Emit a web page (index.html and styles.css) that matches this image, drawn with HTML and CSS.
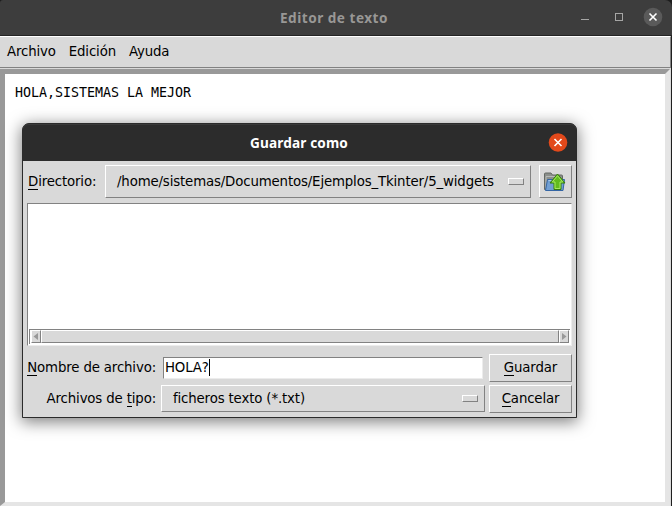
FILE: index.html
```html
<!DOCTYPE html>
<html lang="es">
<head>
<meta charset="utf-8">
<title>Editor de texto</title>
<link rel="stylesheet" href="styles.css">
</head>
<body>
<div class="editor">
  <header class="titlebar">
    <span class="title">Editor de texto</span>
    <svg class="controls" width="96" height="35" viewBox="0 0 96 35">
      <path d="M5 19.5h8" stroke="#a6a6a5"/>
      <rect x="39.500" y="13.500" width="7" height="7" fill="none" stroke="#a6a6a5"/>
      <circle cx="77" cy="17" r="9.300" fill="#5a5a5a"/>
      <path d="M73.500 13.500l7 7m0-7l-7 7" stroke="#fff" stroke-width="1.600"/>
    </svg>
  </header>
  <nav class="menubar"><span>Archivo</span><span>Edición</span><span>Ayuda</span></nav>
  <main class="textarea">HOLA,SISTEMAS LA MEJOR</main>
</div>

<section class="dialog">
  <header class="dialog-title">
    <span class="title">Guardar como</span>
    <svg class="dialog-close" width="20" height="20" viewBox="0 0 20 20">
      <circle cx="10" cy="9.500" r="9.300" fill="#e2491b"/>
      <path d="M6.500 6l7 7m0-7l-7 7" stroke="#fff" stroke-width="1.600"/>
    </svg>
  </header>
  <div class="dialog-body">
    <div class="directory-row">
      <label class="path-label"><u>D</u>irectorio:</label>
      <div class="select raised"><span class="path">/home/sistemas/Documentos/Ejemplos_Tkinter/5_widgets</span><i class="indicator"></i></div>
      <div class="up-button raised">
        <svg width="22" height="20" viewBox="0 0 22 20">
          <path d="M.5 17.500V2q0-1 1-1h5.500l1.500 2h9q1 0 1 1V17.500z" fill="#8b8f8b" stroke="#646864"/>
          <path d="M2 16V4.500h14" fill="none" stroke="#b7bab7"/>
          <path d="M3.500 7.500h17l-1.500 11h-17.500z" fill="#719fd3" stroke="#3465a4"/>
          <path d="M4.500 8.500h15" stroke="#a9c7e8"/>
          <path d="M13.500 2l7.500 9h-4v6.500h-7V11H6z" fill="#62bb1e" stroke="#357c0b"/>
          <path d="M13.500 3.700l5.200 6.300h-2.700v6.500h-5V10H8.300z" fill="none" stroke="#a5e961"/>
        </svg>
      </div>
    </div>
    <div class="listbox">
      <div class="scrollbar">
        <span class="arrow raised"><svg width="8" height="11" viewBox="0 0 8 11"><path d="M6 2v7L1.500 5.500z" fill="#999"/></svg></span>
        <span class="thumb raised"></span>
        <span class="arrow raised"><svg width="8" height="11" viewBox="0 0 8 11"><path d="M2 2v7l4.500-3.500z" fill="#999"/></svg></span>
      </div>
    </div>
    <div class="form">
      <div class="file-row">
        <label><u>N</u>ombre de archivo:</label>
        <div class="entry"><span class="name">HOLA?</span><i class="caret"></i></div>
        <div class="button raised"><span><u>G</u>uardar</span></div>
      </div>
      <div class="type-row">
        <label>Archivos de <u>t</u>ipo:</label>
        <div class="select raised"><span>ficheros texto (*.txt)</span><i class="indicator"></i></div>
        <div class="button raised"><span><u>C</u>ancelar</span></div>
      </div>
    </div>
  </div>
</section>
</body>
</html>
```
FILE: styles.css
```css
* { box-sizing: border-box; }
body {
  margin: 0;
  width: 672px;
  height: 506px;
  overflow: hidden;
  background: #1c1c1c;
  color: #000;
  font: 13.33px/18px "DejaVu Sans", sans-serif;
  letter-spacing: -.15px;
  white-space: nowrap;
}
.editor {
  display: flex;
  flex-direction: column;
  height: 506px;
  border-right: 1px solid #1f1f1f;
}
.titlebar {
  display: flex;
  flex: none;
  align-items: center;
  justify-content: flex-end;
  height: 36px;
  margin-right: -1px;
  background: #3d3d3d;
  border-bottom: 1px solid #242424;
  border-radius: 3px 7px 0 0;
}
.title {
  flex: 1;
  text-align: center;
  font: bold 13.6px/18px "Noto Sans", sans-serif;
  letter-spacing: .15px;
}
.titlebar .title { padding-left: 92px; color: #989795; letter-spacing: .5px; }
.controls { flex: none; }
.menubar {
  display: flex;
  flex: none;
  gap: 13px;
  height: 32px;
  padding: 6px 7px 0;
  background: #d9d9d9;
  border-top: 1px solid #fff;
  border-right: 1px solid #828282;
  border-bottom: 1px solid #828282;
}
.textarea {
  flex: 1;
  margin: 1px 1px 0 0;
  padding: 10px;
  background: #fff;
  border: 5px solid;
  border-color: #999 #e5e5e5 #e5e5e5 #999;
  border-bottom-width: 4px;
  outline: 1px solid #d9d9d9;
  font: 13.33px/18px "DejaVu Sans Mono", monospace;
  letter-spacing: -.02px;
}
.dialog {
  position: absolute;
  left: 22px;
  top: 123px;
  width: 555px;
  height: 295px;
  background: #2c2c2c;
  border: 1px solid #2b2b2b;
  border-radius: 7px 7px 0 0;
  box-shadow: 0 3px 16px 1px rgba(0, 0, 0, .5);
}
.dialog-title {
  display: flex;
  align-items: center;
  height: 37px;
  padding-right: 8px;
  border-top: 1px solid #3a3a3a;
  border-radius: 6px 6px 0 0;
}
.dialog-title .title { padding-left: 27px; color: #fff; }
.dialog-body {
  height: 256px;
  padding: 4px 4px 0;
  background: #d9d9d9;
}
.raised {
  background: #d9d9d9;
  border: 1px solid;
  border-color: #fff #828282 #828282 #fff;
}
u { text-decoration: none; border-bottom: 1px solid #000; display: inline-block; height: 17px; line-height: 18px; }
.directory-row { display: flex; height: 33px; }
.directory-row label { width: 78px; padding: 8px 0 0 1px; }
.select { display: flex; align-items: center; justify-content: space-between; padding: 0 6px 0 11px; }
.directory-row .select { width: 426px; }
.indicator { width: 16px; height: 7px; border: 1px solid; border-color: #fff #828282 #828282 #fff; }
.up-button { display: flex; align-items: center; justify-content: center; width: 33px; margin-left: 8px; padding-right: 1px; }
.listbox {
  display: flex;
  align-items: flex-end;
  height: 143px;
  margin-top: 5px;
  padding: 0 1px 1px;
  background: #fff;
  border: 1px solid;
  border-color: #828282 #ececec #ececec #828282;
}
.scrollbar {
  display: flex;
  width: 100%;
  height: 15px;
  padding: 0 1px 1px;
  border-top: 1px solid #828282;
  border-left: 1px solid #828282;
}
.arrow { display: flex; flex: none; width: 10px; height: 13px; }
.thumb { flex: 1; height: 13px; }
.form { display: flex; flex-direction: column; gap: 3px; margin-top: 8px; }
.file-row, .type-row { display: flex; height: 28px; }
.form label { width: 129px; text-align: right; padding-top: 5px; }
.entry {
  display: flex;
  width: 320px;
  height: 22px;
  margin: 3px 6px 0 7px;
  padding: 1px 0 0 1px;
  background: #fff;
  border: 1px solid;
  border-color: #828282 #ececec #ececec #828282;
}
.caret { width: 1px; height: 17px; background: #000; }
.type-row .select { width: 324px; height: 27px; margin: 0 4px 0 5px; }
.button { display: flex; align-items: center; justify-content: center; width: 83px; }
```
